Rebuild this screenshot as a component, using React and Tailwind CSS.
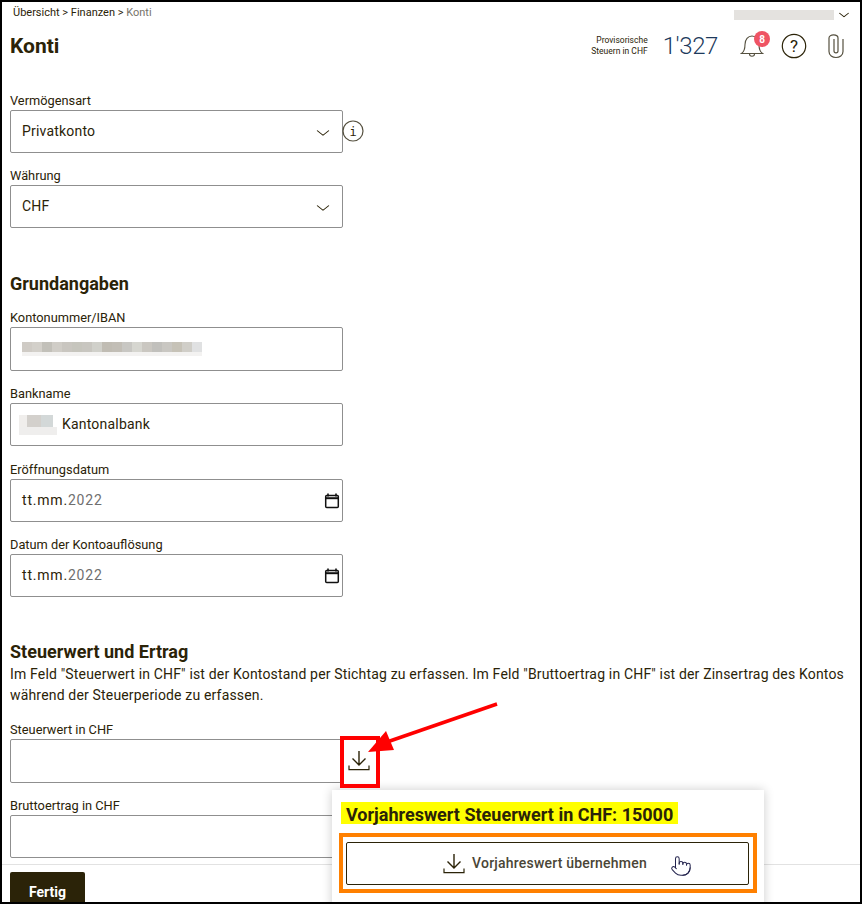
import { ChevronDown, Pointer } from 'lucide-react';

const kontoBlur = [
  'bg-[#cfcbc5]', 'bg-[#d3d0ca]', 'bg-[#c2c0b9]', 'bg-[#d0cdc7]', 'bg-[#c9c6c0]', 'bg-[#c6c5bd]', 'bg-[#c8c6c0]',
  'bg-[#d0d0ca]', 'bg-[#c0bcb3]', 'bg-[#c2beb6]', 'bg-[#c8c7c3]', 'bg-[#d6d6d0]', 'bg-[#cac7c1]', 'bg-[#c1c0bc]',
  'bg-[#c9c7c2]', 'bg-[#c6c2b7]', 'bg-[#d0cec8]', 'bg-[#e0e1e2]',
];

function Label({ children }) {
  return <label className="block text-[12.8px] leading-[15px] text-[#2b2308]">{children}</label>;
}

function Box({ children, className = '' }) {
  return (
    <div className={`mt-[2px] flex w-[333px] items-center rounded-[2px] border border-[#8f8f8f] bg-white pl-[11px] text-[14px] tracking-[0.2px] text-[#2b2308] ${className}`}>
      {children}
    </div>
  );
}

function SelectBox({ value }) {
  return (
    <Box className="h-[43px] justify-between pr-[10px]">
      <span>{value}</span>
      <ChevronDown size={18} strokeWidth={1.2} className="mt-[3px] scale-x-125 text-[#2b2308]" />
    </Box>
  );
}

function DateBox() {
  return (
    <Box className="h-[43px] justify-between pr-[2px]">
      <span className="tracking-[0.8px]">
        tt.mm.<span className="text-[#6f6f6f]">2022</span>
      </span>
      <svg width="16" height="16" viewBox="0 0 16 16" fill="none">
        <path d="M4 0.500v3M12 0.500v3" stroke="#111" strokeWidth="1.6" />
        <rect x="1.700" y="2.500" width="12.600" height="12" rx="1" stroke="#111" strokeWidth="1.500" />
        <path d="M1.700 5.200h12.600" stroke="#111" strokeWidth="2" />
      </svg>
    </Box>
  );
}

function DownloadIcon() {
  return (
    <svg width="22" height="22" viewBox="0 0 22 22" fill="none" stroke="#2b2308" strokeWidth="1.4">
      <path d="M11 1v14M4.500 8.500 11 15l6.500-6.500" />
      <path d="M1 15.500v4.200h20v-4.200" strokeWidth="1.200" />
    </svg>
  );
}

export default function App() {
  return (
    <div className="relative h-[904px] w-[862px] overflow-hidden border-2 border-black bg-white font-['Roboto',sans-serif] text-[#2b2308]">
      {/* Header */}
      <div className="flex items-start justify-between pl-[11px] pr-[9px] pt-[4px]">
        <div className="text-[11px] leading-[13px]">
          Übersicht &gt; Finanzen &gt; <span className="text-[#77736a]">Konti</span>
        </div>
        <div className="mt-[2px] flex items-center gap-[2px]">
          <div className="h-[10px] w-[100px] bg-[#e4e2df]" />
          <ChevronDown size={14} strokeWidth={1.5} className="ml-[1px] scale-x-125" />
        </div>
      </div>

      <div className="mt-[10px] flex items-center justify-between pl-[8px] pr-[15px]">
        <h1 className="text-[21px] font-bold leading-[24px]">Konti</h1>
        <div className="flex items-center">
          <div className="mr-[15px] text-right text-[8.5px] leading-[11.5px]">
            Provisorische
            <br />
            Steuern in CHF
          </div>
          <div className="mr-[22px] text-[24px] font-light leading-[28px] tracking-[-0.4px] text-[#1d3a5c]">1'327</div>
          <div className="relative mr-[17px]">
            <svg width="24" height="26" viewBox="0 0 24 26" fill="none" stroke="#55503f" strokeWidth="1.1">
              <path d="M1.500 20.500c3-2 3.500-5 3.500-9 0-5 3-8.500 7-8.500s7 3.500 7 8.500c0 4 .5 7 3.500 9z" />
              <path d="M9.500 21c0 3 5 3 5 0" />
            </svg>
            <span className="absolute -right-[6px] -top-[2px] flex h-[16px] w-[16px] items-center justify-center rounded-full bg-[#ef5464] text-[10px] font-bold text-white">
              8
            </span>
          </div>
          <svg width="26" height="26" viewBox="0 0 26 26" fill="none" className="mr-[20px]" stroke="#2b2308" strokeWidth="1.2">
            <circle cx="13" cy="13" r="11.700" />
            <text x="13" y="19" textAnchor="middle" fontSize="17" fill="#2b2308" stroke="none" fontFamily="Roboto">?</text>
          </svg>
          <svg width="18" height="26" viewBox="0 0 18 26" fill="none" stroke="#55503f" strokeWidth="1.2">
            <path d="M7 6v12c0 2.500 4 2.500 4 0V5C11 .8 2 .8 2 5v13.500c0 8 14 8 14 0V6" />
          </svg>
        </div>
      </div>

      {/* Form */}
      <div className="pl-[8px]">
        <div className="mt-[33px]">
          <Label>Vermögensart</Label>
          <div className="flex items-center">
            <SelectBox value="Privatkonto" />
            <svg width="22" height="22" viewBox="0 0 22 22" fill="none" className="-ml-[1px] mt-[1px]">
              <circle cx="11" cy="11" r="10" stroke="#55503f" strokeWidth="1.2" />
              <text x="11" y="15.500" textAnchor="middle" fontSize="12" fill="#2b2308" fontFamily="'DejaVu Sans Mono'">i</text>
            </svg>
          </div>
        </div>
        <div className="mt-[15px]">
          <Label>Währung</Label>
          <SelectBox value="CHF" />
        </div>

        <h2 className="mt-[45px] text-[18px] font-bold leading-[22px]">Grundangaben</h2>

        <div className="mt-[15px]">
          <Label>Kontonummer/IBAN</Label>
          <Box className="h-[44px]">
            <div className="flex h-[14px] flex-col">
              <div className="flex h-[10px]">
                {kontoBlur.map((c, i) => (
                  <div key={i} className={`h-full w-[10px] ${c}`} />
                ))}
              </div>
              <div className="h-[4px] w-[180px] bg-[#f3f2f1]" />
            </div>
          </Box>
        </div>
        <div className="mt-[15px]">
          <Label>Bankname</Label>
          <Box className="h-[43px]">
            <div className="-ml-[3px] mr-[3px] flex h-[20px] w-[40px] flex-col">
              <div className="flex h-[12px]">
                <div className="h-full w-[8px] bg-[#f0eeec]" />
                <div className="h-full w-[14px] bg-[#d3d0cc]" />
                <div className="h-full w-[12px] bg-[#d3d8d8]" />
              </div>
              <div className="h-[8px] w-[38px] bg-[#efeeed]" />
            </div>
            Kantonalbank
          </Box>
        </div>
        <div className="mt-[16px]">
          <Label>Eröffnungsdatum</Label>
          <DateBox />
        </div>
        <div className="mt-[15px]">
          <Label>Datum der Kontoauflösung</Label>
          <DateBox />
        </div>

        <h2 className="mt-[44px] text-[18px] font-bold leading-[22px]">Steuerwert und Ertrag</h2>
        <p className="mt-[1px] w-[842px] text-[14px] leading-[21px] tracking-[0.17px]">
          Im Feld "Steuerwert in CHF" ist der Kontostand per Stichtag zu erfassen. Im Feld "Bruttoertrag in CHF" ist der Zinsertrag des Kontos während der Steuerperiode zu erfassen.
        </p>

        <div className="mt-[16px]">
          <Label>Steuerwert in CHF</Label>
          <div className="flex items-center">
            <Box className="h-[44px]" />
            <div className="ml-[5px] mt-[1px]">
              <DownloadIcon />
            </div>
          </div>
        </div>
        <div className="mt-[15px]">
          <Label>Bruttoertrag in CHF</Label>
          <Box className="h-[43px]" />
        </div>
      </div>

      {/* Footer */}
      <div className="mt-[6px] border-t border-[#e2e2e2] pl-[8px] pt-[7px]">
        <button className="h-[40px] w-[75px] rounded-[2px] bg-[#2b2308] text-[14px] font-bold text-white">Fertig</button>
      </div>

      {/* Popover */}
      <div className="absolute left-[330px] top-[788px] h-[120px] w-[432px] bg-white pl-[9px] pr-[7px] pt-[12px] shadow-[0_0_10px_rgba(0,0,0,0.2)]">
        <div className="block h-[22px] w-[337px] whitespace-nowrap bg-[#ffff00] px-[5px] text-[18px] font-bold leading-[25px]">
          Vorjahreswert Steuerwert in CHF: 15000
        </div>
        <div className="-ml-[2px] mt-[9px] h-[60px] w-[418px] border-[4px] border-[#ff8000] pb-[5px] pl-[3px] pr-[4px] pt-[5px]">
          <button className="relative flex h-[43px] w-full items-center justify-center rounded-[2px] border border-[#2b2308] bg-white pr-[5px] text-[14px] font-medium tracking-[0.2px] text-[#4a4536]">
            <DownloadIcon />
            <span className="ml-[7px]">Vorjahreswert übernehmen</span>
            <Pointer size={22} strokeWidth={1.1} className="absolute left-[323px] top-[12px] text-[#23234d]" />
          </button>
        </div>
      </div>

      {/* Annotations */}
      <div className="absolute left-[338px] top-[734px] h-[52px] w-[40px] border-[4px] border-[#ff0000]" />
      <svg className="absolute left-[360px] top-[698px]" width="140" height="60" viewBox="0 0 140 60" fill="none">
        <path d="M135 4 25 42" stroke="#ff0000" strokeWidth="3.500" />
        <path d="M6 52 24 31 32 50z" fill="#ff0000" />
      </svg>
    </div>
  );
}
